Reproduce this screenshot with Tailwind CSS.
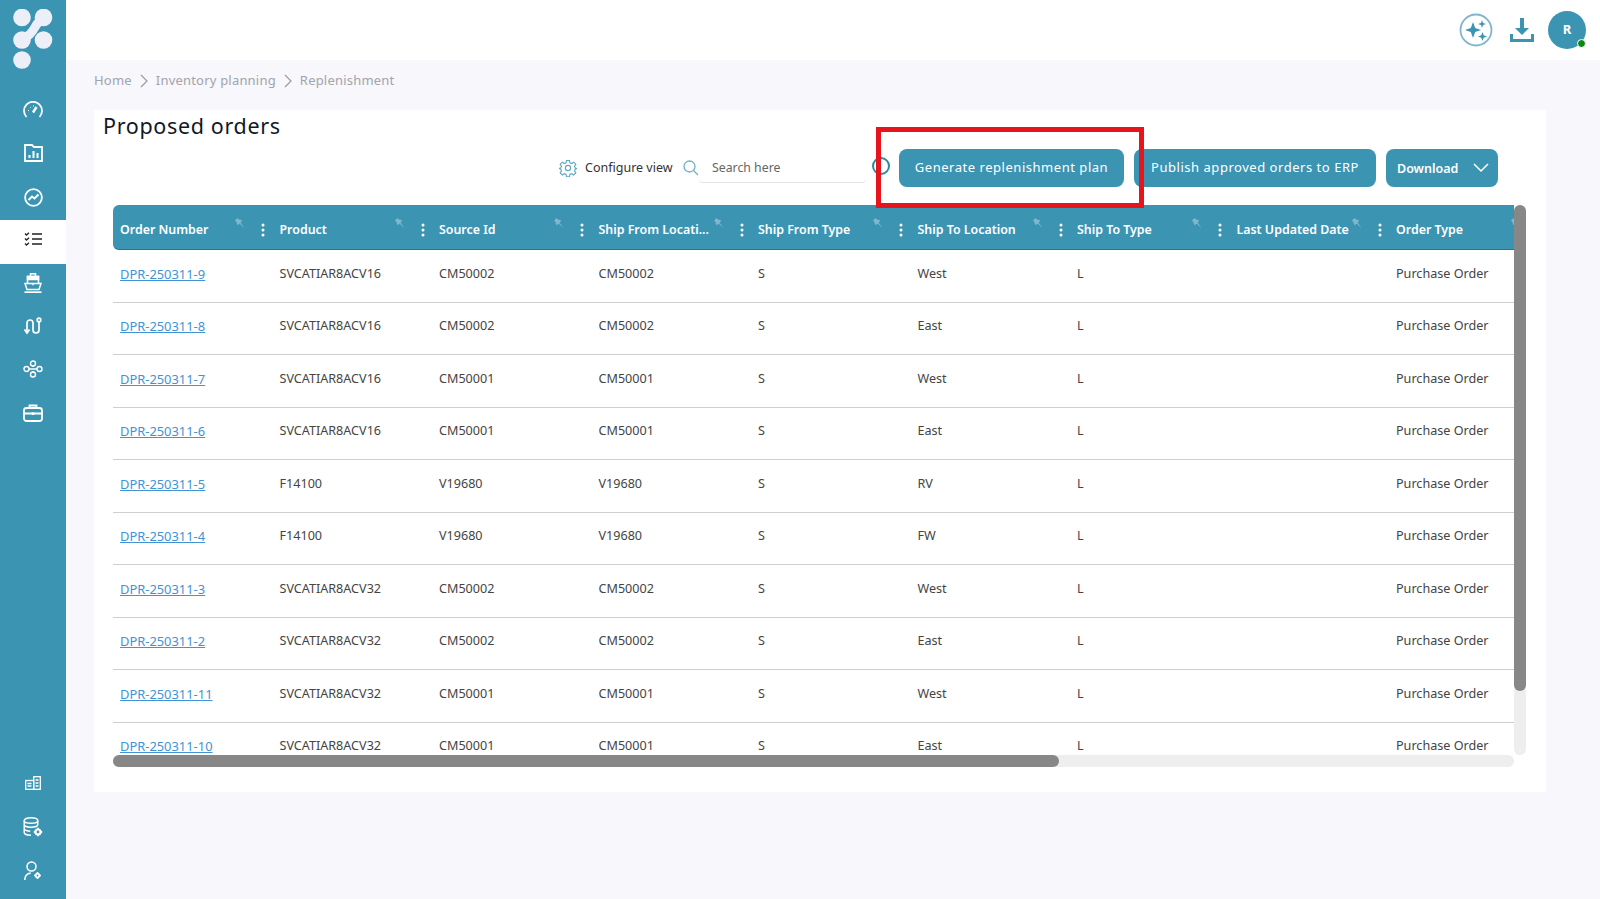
<!DOCTYPE html>
<html lang="en">
<head>
    <meta charset="UTF-8">
    <title>Proposed orders</title>
    <script src="https://cdn.jsdelivr.net/npm/@tailwindcss/browser@4"></script>
</head>
<body class="bg-[#f7f7fc] font-['Noto_Sans',sans-serif] overflow-hidden">
<div class="flex h-[899px] w-[1600px]">

    <!-- Sidebar -->
    <aside class="w-[66px] shrink-0 bg-[#3c94b3] flex flex-col justify-between pb-[6px] text-white">
        <div>
            <div class="h-[88px] pt-[9px] pl-[13px]">
                <svg width="42" height="61" viewBox="0 0 42 61" fill="#eceef8">
                    <circle cx="9" cy="8.500" r="8.800"/><circle cx="30.500" cy="8.500" r="8.800"/><circle cx="9" cy="31" r="8.800"/><circle cx="30.500" cy="31" r="8.800"/><circle cx="9" cy="51" r="8.800"/>
                    <path d="M28 11 C21 15 22 25 11 29" fill="none" stroke="#eceef8" stroke-width="9"/>
                </svg>
            </div>
            <div class="h-[43.5px] flex items-center justify-center">
                <svg width="20" height="18" viewBox="0 0 20 18" fill="none" stroke="currentColor" stroke-width="1.800"><path d="M3.500 16 A9 9 0 1 1 16.500 16"/><path d="M10 11.500 L13.500 6" stroke-width="2.400"/><path d="M5 9.500h1M7 6l.6.6M10.500 4.500v1" stroke-width="1"/></svg>
            </div>
            <div class="h-[43.5px] flex items-center justify-center">
                <svg width="19" height="18" viewBox="0 0 19 18" fill="none" stroke="currentColor" stroke-width="1.800"><path d="M1 1h7l2 2h8v14H1z"/><path d="M5.500 14v-3M9.500 14V7M13.500 14V9" stroke-width="2"/></svg>
            </div>
            <div class="h-[44.500px] flex items-center justify-center">
                <svg width="19" height="19" viewBox="0 0 19 19" fill="none" stroke="currentColor" stroke-width="1.800"><circle cx="9.500" cy="9.500" r="8.400"/><path d="M4.500 12 L8 8.500 L10.500 10.500 L14.500 6.500" stroke-width="2"/></svg>
            </div>
            <div class="h-[44px] pb-[5px] bg-white flex items-center justify-center">
                <svg width="18" height="14" viewBox="0 0 18 14" fill="none" stroke="#222" stroke-width="1.300"><path d="M1 1.500l1.500 1.500L5 .8M1 6.500L2.500 8 5 5.800M1 11.500L2.500 13 5 10.800"/><path d="M8 2h10M8 7h10M8 12h10" stroke-width="1.500"/></svg>
            </div>
            <div class="mt-[-2.500px]">
                <div class="h-[43.3px] flex items-center justify-center">
                    <svg width="18" height="20" viewBox="0 0 18 20" fill="none" stroke="currentColor" stroke-width="1.500"><path d="M6.500 3V.8h5V3"/><path d="M3.500 10V3.500h11V10"/><path d="M3.500 3.500h11V6.500h-11z" fill="currentColor"/><path d="M1 10.500h7.500l.5.800.5-.8H17l-2 6H3z"/><path d="M.5 19.200h17" stroke-width="1.700"/></svg>
                </div>
                <div class="h-[43.3px] flex items-center justify-center">
                    <svg width="18" height="18" viewBox="0 0 18 18" fill="none" stroke="currentColor" stroke-width="1.700"><path d="M3 15V6a3 3 0 0 1 6 0v7a3 3 0 0 0 6 0V5"/><circle cx="15" cy="3" r="1.800"/><path d="M.5 12.500L3 16l2.500-3.500"/></svg>
                </div>
                <div class="h-[43.3px] flex items-center justify-center">
                    <svg width="20" height="18" viewBox="0 0 20 18" fill="none" stroke="currentColor" stroke-width="1.400"><circle cx="3.500" cy="9" r="2.500"/><circle cx="10" cy="3.500" r="2.500"/><circle cx="10" cy="14.500" r="2.500"/><circle cx="16.500" cy="9" r="2.500"/><path d="M6 9h8M10 6v1M10 11v1"/></svg>
                </div>
                <div class="h-[43.3px] flex items-center justify-center">
                    <svg width="20" height="18" viewBox="0 0 20 18" fill="none" stroke="currentColor" stroke-width="1.800"><rect x="1" y="4" width="18" height="13" rx="2.500"/><path d="M6.500 4V1.500h7V4M1 9.500h18" /><path d="M10 8.500v2.500" stroke-width="2.500"/></svg>
                </div>
            </div>
        </div>
        <div>
            <div class="h-[44px] flex items-center justify-center">
                <svg width="16" height="14" viewBox="0 0 16 14" fill="none" stroke="currentColor" stroke-width="1.300"><rect x=".7" y="4.500" width="8" height="8.800"/><rect x="8.700" y=".7" width="6.600" height="12.600"/><path d="M2.500 7.500h4M2.500 10h4M10.500 4h3M10.500 7h3M10.500 10h3" stroke-width="1.500"/></svg>
            </div>
            <div class="h-[44px] flex items-center justify-center">
                <svg width="20" height="20" viewBox="0 0 20 20" fill="none" stroke="currentColor" stroke-width="1.400"><ellipse cx="8" cy="3.500" rx="6.800" ry="2.800"/><path d="M1.200 3.500v12c0 1.500 3 2.800 6.800 2.800M1.200 7.500c0 1.500 3 2.800 6.800 2.800s6.800-1.300 6.800-2.800v-4M1.200 11.500c0 1.500 3 2.800 6 2.800"/><circle cx="15" cy="15" r="2.500" stroke-width="2.200"/><path d="M15 10.800v1.500M15 17.700v1.500M10.800 15h1.500M17.700 15h1.500" stroke-width="1.800"/></svg>
            </div>
            <div class="h-[44px] flex items-center justify-center">
                <svg width="18" height="20" viewBox="0 0 18 20" fill="none" stroke="currentColor" stroke-width="1.500"><circle cx="7.500" cy="5.500" r="4.500"/><path d="M.8 19c0-4 2.500-6.500 6-7"/><circle cx="13.500" cy="14.500" r="1.800" stroke-width="1.800"/><path d="M13.500 11v1.300M13.500 16.700V18M10 14.500h1.300M15.700 14.500H17" stroke-width="1.700"/></svg>
            </div>
        </div>
    </aside>

    <!-- Main -->
    <main class="flex-1">
        <!-- Top bar -->
        <div class="h-[60px] bg-white flex items-center justify-end pr-[14px]">
            <svg width="34" height="34" viewBox="0 0 34 34" fill="#3c94b3" class="mr-[17px]">
                <circle cx="17" cy="17" r="15.500" fill="none" stroke="#7fb6cb" stroke-width="1.800"/>
                <path d="M14 9 L16.200 15 L22 17 L16.200 19 L14 25 L11.800 19 L6 17 L11.800 15 Z"/>
                <path d="M23 7 L24 10 L27 11 L24 12 L23 15 L22 12 L19 11 L22 10 Z"/>
                <path d="M23.500 19 L24.700 22.300 L28 23.500 L24.700 24.700 L23.500 28 L22.300 24.700 L19 23.500 L22.300 22.300 Z"/>
            </svg>
            <svg width="24" height="24" viewBox="0 0 24 24" fill="#3c94b3" class="mr-[14px]">
                <path d="M10 0h4v10h5l-7 7-7-7h5z"/><path d="M0 16h3v5h18v-5h3v8H0z"/>
            </svg>
            <div class="relative w-[38px] h-[38px] rounded-full bg-[#3c94b3] text-white text-[13px] font-bold flex items-center justify-center">
                R
                <span class="absolute right-0 bottom-[1px] w-[9px] h-[9px] rounded-full bg-[#0a8a12] border border-white"></span>
            </div>
        </div>

        <!-- Breadcrumb -->
        <div class="h-[50px] pl-[28px] pb-[8px] flex items-center text-[13px] tracking-[0.200px] text-[#a3a3ab]">
            <span>Home</span>
            <svg width="10" height="14" viewBox="0 0 10 14" fill="none" stroke="#9a9aa4" stroke-width="1.200" class="mx-[7px]"><path d="M2 1l6 6-6 6"/></svg>
            <span>Inventory planning</span>
            <svg width="10" height="14" viewBox="0 0 10 14" fill="none" stroke="#9a9aa4" stroke-width="1.200" class="mx-[7px]"><path d="M2 1l6 6-6 6"/></svg>
            <span>Replenishment</span>
        </div>

        <!-- Card -->
        <div class="relative ml-[28px] w-[1452px] h-[682px] bg-white">
            <h1 class="h-[32px] pl-[9px] text-[21.500px] leading-[31px] tracking-[0.650px] text-[#111827]">Proposed orders</h1>

            <div class="mt-[7px] h-[38px] pr-[48px] flex items-center justify-end">
                <svg width="18" height="18" viewBox="0 0 24 24" fill="none" stroke="#5fa8c4" stroke-width="1.500" class="mr-[8px] ml-[-2px]">
                    <circle cx="12" cy="12" r="3.500"/>
                    <path d="M10 2h4l.6 3 2.400 1 2.600-1.700 2.800 2.800L20.700 9.700l1 2.300 2 .6v0l-2 .9-1 2.400 1.700 2.600-2.800 2.800-2.600-1.700-2.400 1-.6 3h-4l-.6-3-2.400-1-2.600 1.700-2.800-2.800 1.700-2.600-1-2.400-2.300-.9v0l2.300-.6 1-2.300-1.700-2.600 2.800-2.800L7 6l2.400-1z"/>
                </svg>
                <span class="w-[98px] text-[12.500px] text-[#333] pt-[1px]">Configure view</span>
                <svg width="16" height="16" viewBox="0 0 16 16" fill="none" stroke="#6fb0c9" stroke-width="1.300"><circle cx="6.500" cy="6.500" r="5.500"/><path d="M10.500 10.500L15 15"/></svg>
                <div class="w-[167px] h-[30px] pl-[13px] pt-[1px] flex items-center border-b border-[#e3e3e8] rounded-b text-[12.300px] text-[#666]">Search here</div>
                <div class="ml-[6px] mr-[9px] mt-[-4px] w-[18px] h-[18px] rounded-full border-2 border-[#2a8c9c]"></div>
                <button class="w-[225px] h-[38px] rounded-[8px] bg-[#3c94b3] text-white text-[13px] tracking-[0.530px]">Generate replenishment plan</button>
                <button class="ml-[10px] w-[242px] h-[38px] rounded-[8px] bg-[#3c94b3] text-white text-[13px] tracking-[0.530px]">Publish approved orders to ERP</button>
                <button class="ml-[10px] w-[112px] h-[38px] rounded-[8px] bg-[#3c94b3] text-white text-[12.500px] font-semibold flex items-center justify-between pl-[11px] pr-[9px]">
                    <span class="pt-[2px]">Download</span>
                    <svg width="16" height="10" viewBox="0 0 16 10" fill="none" stroke="white" stroke-width="1.500"><path d="M1 1l7 7 7-7"/></svg>
                </button>
            </div>

            <!-- Table with scrollbars -->
            <div class="mt-[18px] ml-[19px] w-[1413px]">
                <div class="flex">
                    <div class="w-[1401px] h-[550px] overflow-hidden">
                        <div id="head" class="flex h-[45px] w-[1401px] bg-[#3c94b3] border-b border-[#1f7a96] rounded-l-md text-white text-[12.400px] font-semibold"></div>
                        <div id="rows"></div>
                    </div>
                    <div class="w-[12px] h-[550px] rounded-full bg-[#eeeeee]">
                        <div class="h-[486px] rounded-full bg-[#878787]"></div>
                    </div>
                </div>
                <div class="w-[1401px] h-[12px] rounded-full bg-[#eeeeee]">
                    <div class="w-[946px] h-[12px] rounded-full bg-[#878787]"></div>
                </div>
            </div>

            <!-- Highlight -->
            <div class="absolute left-[782px] top-[17px] w-[268px] h-[81px] border-[5px] border-[#e8141c]"></div>
        </div>
    </main>
</div>

<script>
    const columns = ['Order Number', 'Product', 'Source Id', 'Ship From Locati...', 'Ship From Type', 'Ship To Location', 'Ship To Type', 'Last Updated Date', 'Order Type'];
    const orders = [
        ['DPR-250311-9', 'SVCATIAR8ACV16', 'CM50002', 'West'],
        ['DPR-250311-8', 'SVCATIAR8ACV16', 'CM50002', 'East'],
        ['DPR-250311-7', 'SVCATIAR8ACV16', 'CM50001', 'West'],
        ['DPR-250311-6', 'SVCATIAR8ACV16', 'CM50001', 'East'],
        ['DPR-250311-5', 'F14100', 'V19680', 'RV'],
        ['DPR-250311-4', 'F14100', 'V19680', 'FW'],
        ['DPR-250311-3', 'SVCATIAR8ACV32', 'CM50002', 'West'],
        ['DPR-250311-2', 'SVCATIAR8ACV32', 'CM50002', 'East'],
        ['DPR-250311-11', 'SVCATIAR8ACV32', 'CM50001', 'West'],
        ['DPR-250311-10', 'SVCATIAR8ACV32', 'CM50001', 'East']
    ];
    const pin = '<svg width="10" height="10" viewBox="0 0 10 10" fill="#7fb8cc" class="absolute left-[122px] top-[13px]"><path d="M2.500 0L0 2.500 1.500 4 2 6.500 3 7 4.500 5.500 9.500 10 5.500 4.500 7 3 6.500 2 4 1.500z"/></svg>';
    const kebab = '<svg width="4" height="14" viewBox="0 0 4 14" fill="white" class="absolute left-[148px] top-[18px]"><circle cx="2" cy="2" r="1.500"/><circle cx="2" cy="7" r="1.500"/><circle cx="2" cy="12" r="1.500"/></svg>';

    document.getElementById('head').innerHTML = columns.map(name => `
        <div class="relative w-[159.500px] shrink-0 pl-[7px] pt-[7px] flex items-center whitespace-nowrap">${name}${pin}${kebab}</div>`).join('');

    document.getElementById('rows').innerHTML = orders.map(o => `
        <div class="flex w-[1401px] h-[52.500px] pb-[3px] items-center border-b border-[#cfcfcf] text-[12.600px] text-[#444]">
            <a class="w-[159.500px] shrink-0 pl-[7px] text-[12.900px] text-[#3f93d6] underline">${o[0]}</a>
            <div class="w-[159.500px] shrink-0 pl-[7px]">${o[1]}</div>
            <div class="w-[159.500px] shrink-0 pl-[7px]">${o[2]}</div>
            <div class="w-[159.500px] shrink-0 pl-[7px]">${o[2]}</div>
            <div class="w-[159.500px] shrink-0 pl-[7px]">S</div>
            <div class="w-[159.500px] shrink-0 pl-[7px]">${o[3]}</div>
            <div class="w-[159.500px] shrink-0 pl-[7px]">L</div>
            <div class="w-[159.500px] shrink-0 pl-[7px]"></div>
            <div class="w-[159.500px] shrink-0 pl-[7px] whitespace-nowrap">Purchase Order</div>
        </div>`).join('');
</script>
</body>
</html>
